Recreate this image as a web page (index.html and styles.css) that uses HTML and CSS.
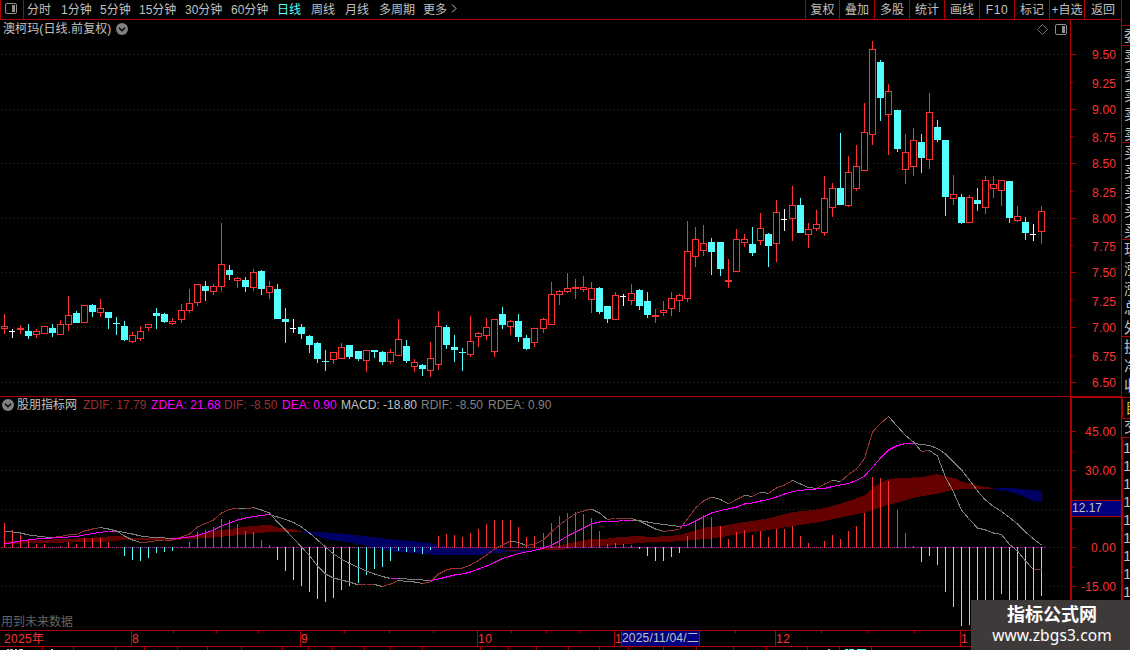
FILE: index.html
```html
<!DOCTYPE html>
<html lang="zh-CN">
<head>
  <meta charset="UTF-8">
  <title>澳柯玛</title>
  <link rel="stylesheet" href="styles.css">
</head>
<body>
  <div class="app">
    <div class="main">
      <div class="toolbar">
        <div class="layout-btn">
          <svg width="12" height="11" viewBox="0 0 12 11"><rect x=".5" y=".5" width="11" height="10" rx="1.5" fill="none" stroke="#909090"/><rect x="7" y="2" width="3" height="7" fill="#909090"/></svg>
        </div>
        <div class="periods">
          <span class="w2">分时</span>
          <span class="w3">1分钟</span>
          <span class="w3">5分钟</span>
          <span class="w4">15分钟</span>
          <span class="w4">30分钟</span>
          <span class="w4">60分钟</span>
          <span class="w2 active">日线</span>
          <span class="w2">周线</span>
          <span class="w2">月线</span>
          <span class="w5">多周期</span>
          <span>更多</span>
          <svg class="more" width="6" height="9" viewBox="0 0 6 9"><path d="M1 .5L5 4.5L1 8.5" fill="none" stroke="#c0c0c0"/></svg>
        </div>
        <div class="tools">
          <span>复权</span>
          <span>叠加</span>
          <span>多股</span>
          <span>统计</span>
          <span>画线</span>
          <span class="latin">F10</span>
          <span>标记</span>
          <span>+自选</span>
          <span>返回</span>
        </div>
      </div>

      <div class="pane price">
        <svg id="priceChart" width="1121" height="376" viewBox="0 20 1121 376"></svg>
        <div class="title">
          <span>澳柯玛(日线.前复权)</span>
          <svg width="12" height="12" viewBox="0 0 12 12"><circle cx="6" cy="6" r="6" fill="#808080"/><path d="M3 4.8L6 7.8L9 4.8" fill="none" stroke="#000" stroke-width="1.4"/></svg>
        </div>
        <div class="corner">
          <svg width="11" height="11" viewBox="0 0 11 11"><path d="M5.5 .5L10.5 5.5L5.5 10.5L.5 5.5Z" fill="none" stroke="#707070"/></svg>
          <svg width="12" height="11" viewBox="0 0 12 11"><rect x=".5" y=".5" width="11" height="10" rx="1.5" fill="none" stroke="#909090"/><rect x="7" y="2" width="3" height="7" fill="#909090"/></svg>
        </div>
      </div>

      <div class="pane macd">
        <svg id="macdChart" width="1121" height="234" viewBox="0 396 1121 234"></svg>
        <div class="legend">
          <svg width="12" height="12" viewBox="0 0 12 12"><circle cx="6" cy="6" r="6" fill="#808080"/><path d="M3 4.8L6 7.8L9 4.8" fill="none" stroke="#000" stroke-width="1.4"/></svg>
          <span class="name">股朋指标网</span>
          <span class="zdif">ZDIF: 17.79</span>
          <span class="zdea">ZDEA: 21.68</span>
          <span class="dif">DIF: -8.50</span>
          <span class="dea">DEA: 0.90</span>
          <span class="macd-value">MACD: -18.80</span>
          <span class="rdif">RDIF: -8.50</span>
          <span class="rdea">RDEA: 0.90</span>
        </div>
        <div class="note">用到未来数据</div>
        <div class="cursor-value">12.17</div>
      </div>

      <div class="pane time">
        <svg id="timeAxis" width="1121" height="20" viewBox="0 630 1121 20"></svg>
        <div class="cursor-date">2025/11/04/二</div>
      </div>
    </div>

    <div class="quote">
      <div class="group gap"></div>
      <div class="group one"><b>委</b></div>
      <div class="group five"><b>卖</b><b>卖</b><b>卖</b><b>卖</b><b>卖</b></div>
      <div class="group five"><b>买</b><b>买</b><b>买</b><b>买</b><b>买</b></div>
      <div class="group five"><b>现</b><b>涨</b><b>涨</b><b>总</b><b>外</b></div>
      <div class="group three"><b>换</b><b>净</b><b>收</b></div>
      <div class="group tab"><b>自</b></div>
      <div class="group head"><b>交</b></div>
      <div class="ticks"><b>1</b><b>1</b><b>1</b><b>1</b><b>1</b><b>1</b><b>1</b><b>1</b><b>1</b></div>
    </div>
  </div>

  <div class="watermark">
    <strong>指标公式网</strong>
    <span>www.zbgs3.com</span>
  </div>

  <script src="chart.js"></script>
</body>
</html>
```
FILE: styles.css
```css
:root {
  --line: #b00000;
  --red: #ff3232;
  --text: #c0c0c0;
  --cyan: #54ffff;
}
* {
  box-sizing: border-box;
}
body {
  margin: 0;
  width: 1130px;
  height: 650px;
  overflow: hidden;
  background: #000;
  color: var(--text);
  font-family: "Liberation Sans", "Noto Sans CJK SC", sans-serif;
  font-size: 12px;
  line-height: 18px;
}
svg {
  display: block;
  flex-shrink: 0;
}
.app {
  display: flex;
  height: 650px;
}
.main {
  width: 1121px;
  flex-shrink: 0;
}

/* top bar */
.toolbar {
  display: flex;
  height: 20px;
  border-bottom: 1px solid var(--line);
  line-height: 20px;
  white-space: nowrap;
}
.layout-btn {
  width: 24px;
  padding: 3px 0 0 4px;
  border-left: 1px solid var(--line);
  border-right: 1px solid var(--line);
}
.periods {
  display: flex;
  flex: 1;
  padding-left: 3px;
}
.periods .w2 { width: 34px; }
.periods .w3 { width: 39px; }
.periods .w4 { width: 46px; }
.periods .w5 { width: 44px; }
.periods .active { color: var(--cyan); }
.periods .more { margin: 4px 0 0 4px; }
.tools {
  display: flex;
}
.tools span {
  width: 35px;
  border-left: 1px solid var(--line);
  text-align: center;
}
.tools span:first-child { width: 34px; }
.tools span:last-child { width: 37px; }
.tools .latin { letter-spacing: 0.6px; }

/* panes */
.pane {
  position: relative;
}
.title {
  position: absolute;
  left: 3px;
  top: 0;
  display: flex;
  align-items: center;
  gap: 5px;
  letter-spacing: 0.1px;
}
.corner {
  position: absolute;
  left: 1037px;
  top: 4px;
  display: flex;
  gap: 7px;
}
.legend {
  position: absolute;
  left: 2px;
  top: 0;
  display: flex;
  align-items: center;
  white-space: nowrap;
}
.legend .name {
  width: 69px;
  padding-left: 3px;
}
.zdif { width: 68px; color: #963232; }
.zdea { width: 73px; color: #ff00ff; letter-spacing: 0.1px; }
.dif { width: 58px; color: #963232; }
.dea { width: 59px; color: #ff00ff; }
.macd-value { width: 80px; }
.rdif { width: 67px; }
.rdif, .rdea { color: #808080; }
.note {
  position: absolute;
  left: 1px;
  bottom: -1px;
  color: #646464;
}
.cursor-value {
  position: absolute;
  left: 1072px;
  top: 104px;
  width: 49px;
  height: 17px;
  border: solid var(--line);
  border-width: 1px 0;
  background: #000080;
  line-height: 15px;
}
.cursor-date {
  position: absolute;
  left: 621px;
  top: 0;
  width: 79px;
  height: 17px;
  border: 1px solid var(--line);
  background: #000080;
  line-height: 15px;
  letter-spacing: 0.2px;
  white-space: nowrap;
}
.axis {
  fill: var(--red);
  font-size: 12px;
}

/* quote column, cut by the window edge */
.quote {
  width: 9px;
  overflow: hidden;
  border-left: 1px solid var(--line);
}
.quote b {
  display: block;
  width: 17px;
  padding-left: 2px;
  font-size: 15px;
  font-weight: 400;
  height: 19.4px;
  line-height: 19px;
}
.group {
  border-bottom: 1px solid var(--line);
}
.gap { height: 26px; }
.one { height: 20px; }
.five { height: 97px; }
.three { height: 61px; }
.tab { height: 21px; color: #c8c800; border-left: 1px solid var(--line); }
.head { height: 19px; }
.head b { line-height: 16px; }
.ticks {
  height: 213px;
  border-left: 1px solid var(--line);
}
.ticks b {
  height: 18px;
  padding-left: 0;
  line-height: 19px;
  font-size: 15px;
}

.watermark {
  position: absolute;
  left: 971px;
  top: 600px;
  width: 159px;
  height: 50px;
  padding: 4px 0 0 3px;
  background: #3f3a3a;
  color: #fff;
  text-align: center;
}
.watermark strong {
  display: block;
  font-size: 18px;
  line-height: 22px;
}
.watermark span {
  display: block;
  font-family: "Noto Sans", "Open Sans", sans-serif;
  font-size: 15.5px;
  letter-spacing: 0.1px;
  line-height: 19px;
}
```
FILE: chart.js
```js
const RED = '#ff3232', CYAN = '#54ffff', WHITE = '#ffffff', LINE = '#b00000';
const GRAY = '#808080', BROWN = '#963232', MAGENTA = '#ff00ff';

// kind, high, body top, body bottom, low
const candles = `
r 314 326 329 334|w 329 331 332 338|r 325 328 330 334|c 324 331 336 339|r 329 331 335 338
r 326 326 334 334|c 324 328 333 337|r 320 324 335 335|r 296 315 325 331|c 311 313 323 323
r 305 305 323 323|c 304 305 312 317|r 299 308 313 317|c 312 312 318 329|c 317 323 324 335
c 321 326 340 341|r 332 335 342 343|r 326 331 339 341|r 324 324 328 331|c 308 313 316 329
c 313 314 322 323|r 318 321 324 325|r 304 310 320 323|r 289 303 311 313|r 284 284 303 306
c 281 286 291 301|r 284 286 292 295|r 223 264 287 291|c 265 270 275 280|r 277 278 281 288
c 277 280 287 292|r 269 272 288 291|c 270 271 289 295|r 281 286 293 299|c 284 289 319 319
c 308 319 322 343|w 319 328 329 333|c 324 327 334 339|c 335 336 345 353|c 342 343 359 363
c 350 361 362 371|r 352 352 360 364|r 343 347 359 359|c 345 345 357 359|c 351 351 359 361
r 350 350 361 372|c 350 350 352 358|c 351 352 362 365|r 349 352 362 364|r 319 339 356 356
c 340 346 361 363|r 359 362 367 372|c 364 365 369 376|r 342 358 371 377|r 311 326 365 370
c 325 327 345 349|c 335 347 350 362|c 348 352 353 371|r 316 341 355 357|r 332 333 337 347
r 318 327 336 340|r 319 319 352 357|c 307 314 325 329|r 320 321 327 335|c 314 321 337 342
c 335 338 349 350|r 328 328 343 347|r 318 319 329 333|r 282 294 325 325|r 290 291 295 305
r 273 288 292 293|r 279 287 289 299|r 276 287 290 292|r 282 288 300 313|c 287 288 312 314
c 306 306 319 323|r 292 295 320 320|w 294 296 297 306|r 284 293 301 305|c 289 290 306 310
c 292 301 315 318|r 309 315 317 323|r 301 310 313 316|r 292 298 309 316|r 294 295 301 312
r 221 251 299 302|r 227 239 257 267|r 225 243 251 256|c 238 242 252 275|c 242 242 269 276
r 259 280 282 288|r 229 239 272 272|r 234 239 243 247|c 227 244 253 256|r 213 228 241 245
c 233 234 246 267|r 200 212 244 262|w 209 219 220 231|r 186 205 219 241|c 198 205 233 233
r 223 229 235 248|r 210 224 229 231|r 176 198 233 236|r 183 188 208 217|c 133 188 205 205
r 156 172 206 207|r 145 166 189 191|r 103 132 171 171|r 41 49 135 145|c 60 62 98 121
r 84 91 115 155|c 110 110 149 152|r 134 152 170 184|r 128 140 167 176|c 134 142 158 173
r 93 112 160 169|c 120 127 140 142|c 140 140 197 216|r 175 194 199 205|c 194 197 223 224
r 195 197 223 223|c 188 200 204 211|r 176 180 208 214|r 176 184 189 198|r 180 180 191 206
c 181 181 218 223|r 206 216 221 222|c 217 222 233 240|w 224 234 235 241|r 206 211 232 244
`.trim().split(/[|\n]/).map(s => {
  const [kind, ...v] = s.split(' ');
  return [kind, ...v.map(Number)];
});

// bar ends, zero is at 547
const bars = [
  523,530,535,541,544,544,547,546,542,544,538,538,538,542,547,556,560,561,558,553,552,551,
  547,542,532,530,527,519,520,524,531,532,540,545,560,571,580,586,592,599,602,598,590,586,
  583,575,569,567,561,551,552,552,554,550,536,534,535,537,533,529,524,520,520,520,527,537,
  536,533,523,516,513,512,514,518,531,544,543,544,545,549,556,561,561,557,553,536,521,515,
  517,526,539,532,530,535,531,537,529,529,526,536,543,547,541,535,539,531,526,513,477,478,
  481,510,533,546,562,556,565,592,607,626,625,622,620,612,594,606,612,616,606,596
];

const dif = [
  531,532,533,535,536,537,537.5,536.5,535,534.5,531,529,527.5,529,531,536,540,542.5,542,540.5,540,540,
  537,534,527,523.5,520,513,509.5,508,509,507.5,510,513,522,530,538.5,547,555.5,566,574,578,580,582,
  585,584.5,584.5,586.5,584,580.5,581.5,582,583.5,582,574,570,568,568,565,560.5,555,549,545,541,542.5,545.5,
  544,540,532,525,519,513.5,511,509,513,519.5,518.5,518.5,518.5,521,525,529,531.5,530.5,529.5,519,508,501,
  497,499.5,504,499.5,495.5,496.5,492,493.5,488,485,480.5,484,487.5,488.5,484,480.5,481.5,474.5,469,458.5,432,423.5,
  416.5,426.5,435.5,442,451.5,450.5,456,477,492,510,519.5,528,530,533,534.5,544.5,551,561,569.5,569.5
];

const dea = [
  544,542.5,541,540,539,538.5,538,537.5,537,536.5,535,533.5,532.5,531,531,532.5,534,536,537,537.5,538,538.5,
  538,537,535.5,533,530,526,523,520,518,516.5,515.5,514.5,517,519.5,522.5,527,533,540,547,554,559,563.5,
  567.5,571,574,576.5,578.5,578.5,579,579.5,580,580.5,579,577,575,574,572,569,566,562.5,558.5,556,553.5,552,
  550.5,548,545,541,536,532,528,524,522,521.5,521.5,520.5,520.5,520.6,522,523.5,524.5,525.5,526.5,525,521,517,
  513,510.5,509,507,504,503,501,499.5,497,494,491.5,490.5,489.5,489,488.5,486.5,485,483.5,480.5,476,467.5,458,
  450,445.5,443.5,443.5,444.5,445.5,448.5,454,462,470,480,491,500,506.5,511.5,517.5,524,532,539,545
];

// x, upper edge, lower edge
const bands = [
  ['#640000', [[4,541,544],[40,540,543],[87,538,542],[100,537,542],[113,536,541],[124,536,540],[132,538,540],[174,538,540],[190,536,539],[207,532,538],[230,529,536],[250,526,534],[270,525,532],[280,528,532],[293,529,532],[301,531,532]]],
  ['#000064', [[301,531,532],[313,532,535],[322,532,538],[330,533,540],[347,534,542],[363,536,545],[380,538,549],[397,540,552],[413,541,553],[430,543,554.5],[438,545,555],[447,547,554.5],[455,548,555],[480,548,555],[495,549,553],[510,550,552],[538,550,551]]],
  ['#640000', [[506,550,551],[520,550,551]]],
  ['#640000', [[538,548,550],[560,545,550],[575,542,548],[590,539,547],[603,539,546],[620,537,545],[637,536,543],[653,537,542],[667,536,542],[680,535,541],[693,531,540],[707,527,539],[722,526,537],[737,523,534],[753,521,532],[770,518,530],[793,512,526],[820,509,522],[843,503,517],[857,498,514],[865,495,512.5],[875,486,509],[888,479,505],[900,478,502],[913,477.5,498],[922,477,496],[937,474,494],[948,477,491],[955,478,490],[962,482,489],[973,484,489],[980,486,489],[993,488,489]]],
  ['#000064', [[993,488,489],[1010,488,492],[1023,489,496],[1033,490,501],[1042,491,502]]]
];

const xAt = i => Math.floor(4.02 + 8.045 * i);
const rect = (x, y, w, h, fill) => `<rect x="${x}" y="${y}" width="${w}" height="${h}" fill="${fill}"/>`;
const label = (x, y, text, width, anchor = 'end') =>
  `<text class="axis" x="${x}" y="${y}" text-anchor="${anchor}" textLength="${width}">${text}</text>`;
const dots = (x1, x2, y, gap, color) =>
  `<path d="M${x1} ${y + 0.5}H${x2}" stroke="${color}" stroke-dasharray="1 ${gap - 1}"/>`;

function wrap(inner) {
  return `<g shape-rendering="crispEdges">${inner}</g>`;
}

function drawPrice() {
  let s = '', text = '';
  const major = [54, 109, 163, 218, 272, 327, 382];
  const minor = [82, 136, 191, 245, 300, 355];
  major.forEach((y, i) => {
    s += dots(1, 1068, y, 4, '#a00000') + rect(1071, y, 5, 1, LINE);
    text += label(1116, y + 5, (9.5 - i * 0.5).toFixed(2), 24);
  });
  minor.forEach((y, i) => {
    s += rect(1071, y, 2, 1, LINE);
    text += label(1116, y + 6, (9.25 - i * 0.5).toFixed(2), 24);
  });
  s += rect(1070, 20, 1, 376, LINE);
  candles.forEach(([kind, high, top, bottom, low], i) => {
    const x = xAt(i);
    const color = kind === 'r' ? RED : kind === 'c' ? CYAN : WHITE;
    s += rect(x, high, 1, low - high, color);
    if (kind === 'w') {
      s += rect(x - 3, top, 6, 1, color);
    } else {
      s += rect(x - 3, top, 7, bottom - top, color);
      if (kind === 'r' && bottom - top > 2) s += rect(x - 2, top + 1, 5, bottom - top - 2, '#000');
    }
  });
  document.getElementById('priceChart').innerHTML = wrap(s) + text;
}

function curve(values, up) {
  let s = '';
  for (let i = 1; i < values.length; i++) {
    const color = values[i] <= values[i - 1] ? up : GRAY;
    s += `<path d="M${xAt(i - 1) + 0.5} ${values[i - 1]}L${xAt(i) + 0.5} ${values[i]}" stroke="${color}" fill="none"/>`;
  }
  return s;
}

function drawMacd() {
  let s = '', text = '';
  [431, 470, 509, 547, 586].forEach((y, i) => {
    s += dots(1, 1068, y, 4, '#a00000') + rect(1072, y, 4, 1, LINE);
    const value = (45 - i * 15).toFixed(2);
    if (i !== 2) text += label(1116, y + 5, value, value.length * 6 + (i === 4 ? -1 : 1));
  });
  [451, 490, 528, 567].forEach(y => s += rect(1072, y, 1, 1, LINE));
  bands.forEach(([color, pts]) => {
    const edge = pts.map(p => p[0] + ',' + p[1]);
    const back = pts.map(p => p[0] + ',' + p[2]).reverse();
    s += `<polygon points="${edge.concat(back).join(' ')}" fill="${color}"/>`;
  });
  s += dots(2, 1046, 547, 2, '#963296');
  bars.forEach((y, i) => {
    if (y <= 547) s += rect(xAt(i), y, 1, 548 - y, RED);
    else s += rect(xAt(i), 547, 1, y - 547, CYAN);
  });
  s += curve(dif, BROWN) + curve(dea, MAGENTA);
  s += rect(0, 396, 1121, 1, LINE) + rect(1070, 396, 51, 2, LINE) + rect(1070, 396, 2, 234, LINE);
  document.getElementById('macdChart').innerHTML = wrap(s) + text;
}

function drawTime() {
  let s = rect(0, 630, 1121, 1, LINE) + rect(0, 646, 1121, 1, LINE);
  [131, 300, 477, 614, 775, 960].forEach(x => s += rect(x, 631, 1, 15, LINE));
  [173, 216, 258, 344, 389, 433, 511, 546, 580, 735, 821, 868, 914].forEach(x => s += rect(x, 631, 1, 2, LINE));
  [42, 73, 115, 144, 177, 207, 241, 282, 308, 332, 364, 390, 422, 480, 508, 536, 568, 599, 628, 663, 696, 733, 766, 807, 839, 871]
    .forEach(x => s += rect(x, 647, 1, 3, LINE));
  [[7, 2], [10, 3], [15, 2], [19, 4], [51, 2], [828, 2]].forEach(([x, w]) => s += rect(x, 649, w, 1, '#c0c0c0'));
  [[845, 3], [849, 5], [857, 9]].forEach(([x, w]) => s += rect(x, 649, w, 1, CYAN));
  const text = label(4, 643, '2025年', 40, 'start') + label(132, 643, '8', 7, 'start') +
    label(301, 643, '9', 7, 'start') + label(478, 643, '10', 14, 'start') +
    label(615, 643, '1', 6, 'start') + label(776, 643, '12', 14, 'start') + label(961, 643, '1', 6, 'start');
  document.getElementById('timeAxis').innerHTML = wrap(s) + text;
}

drawPrice();
drawMacd();
drawTime();
```
